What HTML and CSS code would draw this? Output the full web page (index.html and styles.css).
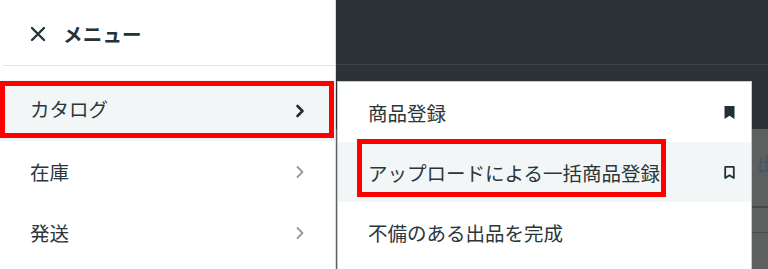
FILE: index.html
```html
<!DOCTYPE html>
<html lang="ja">
<head>
<meta charset="utf-8">
<title>メニュー</title>
<link rel="stylesheet" href="styles.css">
</head>
<body>
<div class="screen">
  <aside class="menu">
    <header class="menu-head">
      <svg class="close-icon" width="16" height="16" viewBox="0 0 16 16"><path d="M2 2 L14 14 M14 2 L2 14" fill="none" stroke="currentColor" stroke-width="2.4" stroke-linecap="round"/></svg>
      <span class="menu-title">メニュー</span>
    </header>
    <ul class="menu-list">
      <li class="menu-item is-active">
        <span>カタログ</span>
        <svg class="chev" width="10" height="14" viewBox="0 0 10 14"><path d="M2.5 2 L7.5 7 L2.5 12" fill="none" stroke="currentColor" stroke-width="2.6" stroke-linecap="round" stroke-linejoin="round"/></svg>
      </li>
      <li class="menu-item">
        <span>在庫</span>
        <svg class="chev" width="10" height="14" viewBox="0 0 10 14"><path d="M2.5 2 L7.5 7 L2.5 12" fill="none" stroke="currentColor" stroke-width="1.8" stroke-linecap="round" stroke-linejoin="round"/></svg>
      </li>
      <li class="menu-item">
        <span>発送</span>
        <svg class="chev" width="10" height="14" viewBox="0 0 10 14"><path d="M2.5 2 L7.5 7 L2.5 12" fill="none" stroke="currentColor" stroke-width="1.8" stroke-linecap="round" stroke-linejoin="round"/></svg>
      </li>
    </ul>
    <div class="annot annot-catalog"></div>
  </aside>
  <main class="backdrop">
    <div class="bd-header">
      <div class="bd-bar"></div>
      <div class="bd-bar bd-bar-2"></div>
    </div>
    <div class="bd-content">
      <div class="bd-title">出品</div>
      <div class="bd-rule bd-rule-dark"></div>
      <div class="bd-rule"></div>
    </div>
    <div class="submenu">
      <div class="sub-item">
        <span>商品登録</span>
        <svg class="bm" width="13" height="15" viewBox="0 0 13 15"><path d="M1.5 1 H11.5 V14 L6.5 10.8 L1.5 14 Z" fill="currentColor"/></svg>
      </div>
      <div class="sub-item is-hover">
        <span>アップロードによる一括商品登録</span>
        <svg class="bm" width="13" height="15" viewBox="0 0 13 15"><path d="M2.2 1.9 H10.8 V13 L6.5 10.2 L2.2 13 Z" fill="none" stroke="currentColor" stroke-width="1.8" stroke-linejoin="round"/></svg>
      </div>
      <div class="sub-item">
        <span>不備のある出品を完成</span>
      </div>
      <div class="annot annot-upload"></div>
    </div>
  </main>
</div>
</body>
</html>
```
FILE: styles.css
```css
* { box-sizing: border-box; }
html, body {
  margin: 0;
  padding: 0;
  width: 768px;
  height: 269px;
  overflow: hidden;
  background: #fff;
}
body {
  font-family: "Noto Sans CJK JP", "Noto Sans", sans-serif;
  color: #24323a;
}
.screen {
  display: flex;
  height: 269px;
}
.menu {
  position: relative;
  width: 336px;
  flex: none;
  background: #fff;
  border-right: 1px solid #d9dcdc;
}
.menu-head {
  height: 66px;
  margin-left: 3px;
  border-bottom: 1px solid #e4e6e6;
  display: flex;
  align-items: center;
  gap: 17px;
  padding-left: 27px;
  padding-top: 2px;
}
.close-icon { color: #23343a; }
.menu-title {
  font-size: 19.5px;
  font-weight: 700;
  color: #24323a;
  letter-spacing: 0.2px;
}
.menu-list {
  list-style: none;
  margin: 0;
  padding: 14px 0 0;
}
.menu-item {
  height: 61px;
  display: flex;
  align-items: center;
  justify-content: space-between;
  padding: 0 30px 0 30px;
  font-size: 19.5px;
  color: #2a363c;
}
.menu-item .chev { color: #8f9a9e; margin-top: 1px; }
.menu-item.is-active { background: #f3f6f6; }
.menu-item.is-active span { margin-top: -4px; }
.menu-item.is-active .chev { color: #1f3036; }

.annot {
  position: absolute;
  border: 5px solid #ff0000;
  pointer-events: none;
}
.annot-catalog {
  left: 0;
  top: 81px;
  width: 334px;
  height: 57px;
}

.backdrop {
  position: relative;
  flex: 1;
  background: #5e5f5f;
  display: flex;
  flex-direction: column;
}
.bd-header {
  height: 129px;
  background: #2c3336;
  display: flex;
  flex-direction: column;
}
.bd-bar {
  height: 65px;
  border-bottom: 1px solid #3a4448;
}
.bd-bar-2 { border-bottom: none; flex: 1; }
.bd-content {
  padding-left: 421px;
  padding-top: 21px;
  display: flex;
  flex-direction: column;
}
.bd-title {
  font-size: 19px;
  line-height: 26px;
  color: #3e5866;
  white-space: nowrap;
}
.bd-rule {
  height: 1px;
  background: #4b4c4c;
  margin-top: 24px;
  margin-left: -5px;
}
.bd-rule-dark { height: 2px; margin-top: 30px; background: #474848; }

.submenu {
  position: absolute;
  left: 1px;
  top: 81px;
  width: 415px;
  height: 200px;
  background: #fff;
  border: 1px solid #c8cbcb;
  display: flex;
  flex-direction: column;
}
.sub-item {
  height: 60px;
  flex: none;
  display: flex;
  align-items: center;
  justify-content: space-between;
  padding: 0 15px 0 30px;
  font-size: 19.5px;
  color: #2a363c;
}
.sub-item.is-hover { background: #f3f6f6; }
.sub-item .bm { color: #1e3238; }
.annot-upload {
  left: 19px;
  top: 57px;
  width: 309px;
  height: 58px;
}
```
